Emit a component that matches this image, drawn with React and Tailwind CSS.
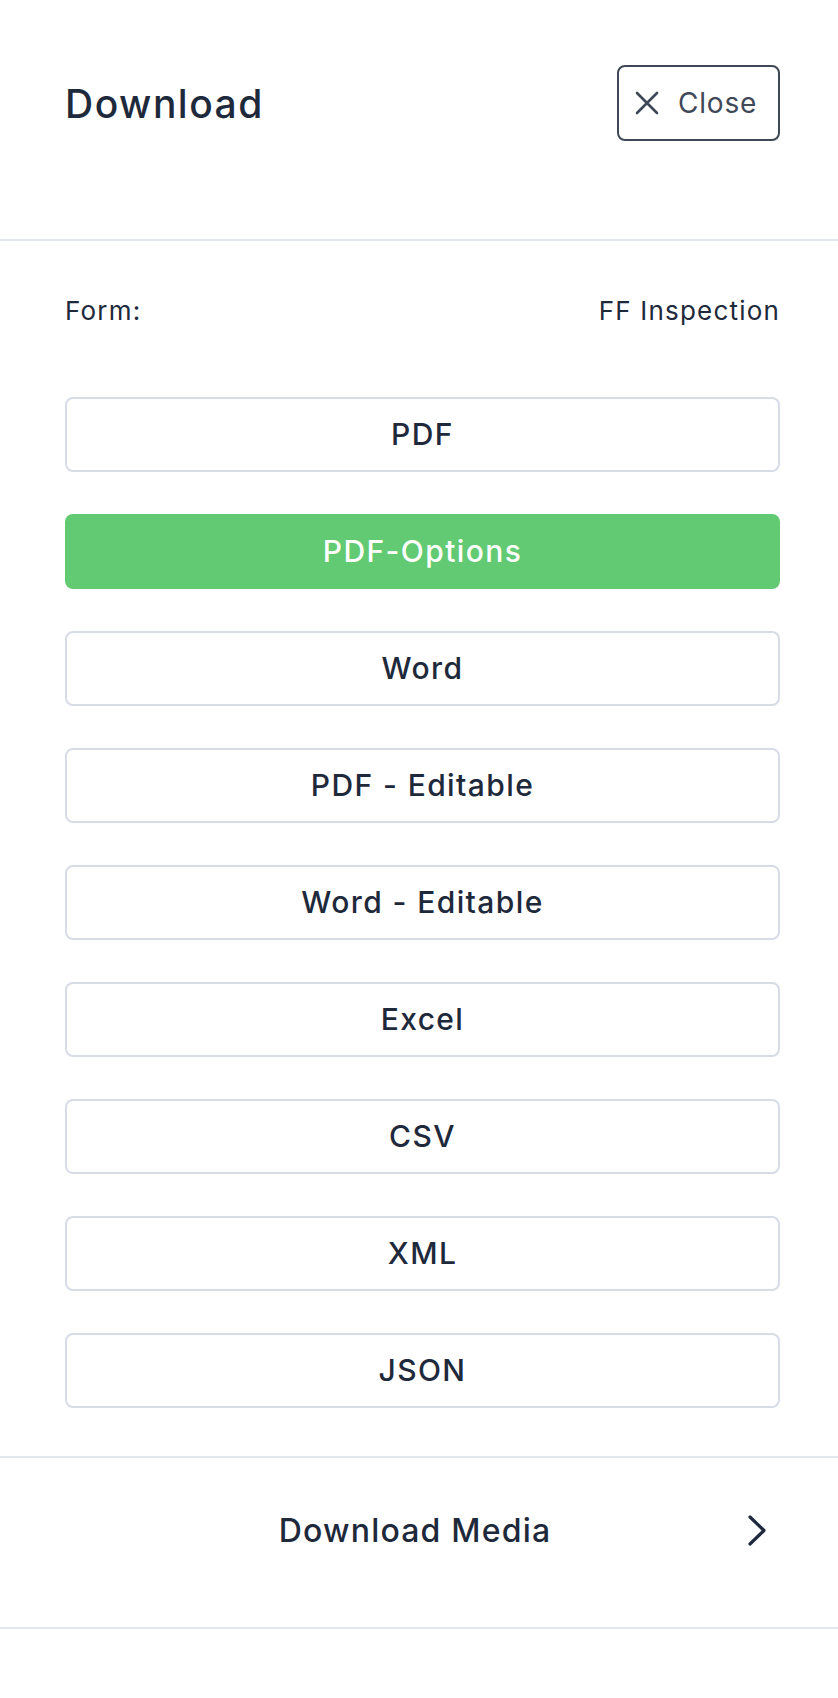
const formats = [
  "PDF",
  "PDF-Options",
  "Word",
  "PDF - Editable",
  "Word - Editable",
  "Excel",
  "CSV",
  "XML",
  "JSON",
];

const CloseIcon = () => (
  <svg width="26" height="26" viewBox="0 0 26 26" fill="none">
    <path
      d="M3 3L23 23M23 3L3 23"
      stroke="#3f4857"
      strokeWidth="2.6"
      strokeLinecap="round"
    />
  </svg>
);

const ChevronIcon = () => (
  <svg width="22" height="31" viewBox="0 0 22 31" fill="none">
    <path
      d="M4 2L18 15.5L4 29"
      stroke="#1e293b"
      strokeWidth="3.2"
      strokeLinecap="round"
      strokeLinejoin="round"
    />
  </svg>
);

const FormatButton = ({ label, active }) => (
  <button
    className={
      active
        ? "h-[75px] w-full rounded-[8px] bg-[#62ca72] text-white text-[30px] font-medium tracking-[1.4px]"
        : "h-[75px] w-full rounded-[8px] border-2 border-[#d7dce6] bg-white text-[#1e293b] text-[30px] font-medium tracking-[1.4px]"
    }
  >
    {label}
  </button>
);

export default function App() {
  return (
    <div className="min-h-[1698px] w-full bg-white font-['Inter',sans-serif] text-[#1e293b]">
      <div className="flex items-center justify-between pl-[65px] pr-[58px] pt-[65px] pb-[98px] border-b-2 border-[#e3e7ef]">
        <h1 className="text-[39px] font-medium leading-none tracking-[1.5px]">
          Download
        </h1>
        <button className="flex h-[76px] w-[163px] items-center gap-[18px] rounded-[8px] border-2 border-[#3f4857] pl-[15px]">
          <CloseIcon />
          <span className="text-[28px] tracking-[0.8px] text-[#3f4857]">Close</span>
        </button>
      </div>

      <div className="pl-[65px] pr-[58px] pt-[52px] pb-[48px] border-b-2 border-[#e3e7ef]">
        <div className="flex items-center justify-between text-[26px] leading-[36px] tracking-[1.2px]">
          <span>Form:</span>
          <span>FF Inspection</span>
        </div>
        <div className="mt-[68px] flex flex-col gap-[42px]">
          {formats.map((f) => (
            <FormatButton key={f} label={f} active={f === "PDF-Options"} />
          ))}
        </div>
      </div>

      <div className="flex items-center pl-[84px] pr-[70px] pt-[50px] pb-[74px] border-b-2 border-[#e3e7ef]">
        <span className="flex-1 text-center text-[32px] font-medium leading-[45px] tracking-[1.2px]">
          Download Media
        </span>
        <ChevronIcon />
      </div>
    </div>
  );
}
